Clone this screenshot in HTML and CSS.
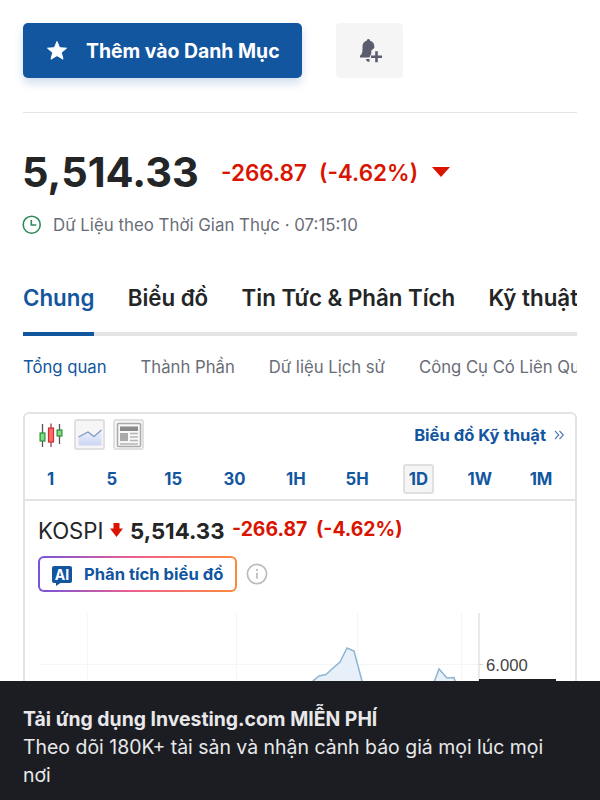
FILE: index.html
```html
<!DOCTYPE html>
<html lang="vi">
<head>
    <meta charset="UTF-8">
    <meta name="viewport" content="width=device-width, initial-scale=1.0">
    <title>KOSPI</title>
    <link rel="stylesheet" href="styles.css">
</head>
<body>

<main class="page">
    <div class="actions">
        <button class="btn-watchlist">
            <svg width="22" height="22" viewBox="0 0 22 22"><path d="M11 1.500l2.600 6.200 6.900.5-5.200 4.400 1.700 6.600L11 15.600l-6 3.600 1.700-6.600L1.500 8.200l6.900-.5z" fill="#fff" stroke="#fff" stroke-linejoin="round"/></svg>
            <span>Thêm vào Danh Mục</span>
        </button>
        <button class="btn-alert">
            <svg width="24" height="24" viewBox="0 0 24 24" fill="#5b5d6e">
                <path d="M8.700 1.800a1.700 1.700 0 0 1 3.400 0C14.600 2.500 16.300 4.700 16.300 7.100V9L13.300 11.500V14.500L11.500 18.500H2V16.800C4 15.300 4.500 13 4.500 10V7.500C4.500 4.700 6 2.500 8.700 1.800z"/>
                <path d="M8 20h3.500v2.800A2.900 2.900 0 0 1 8 20z"/>
                <path d="M17.200 12.200h2.600v4.200h4.200v2.600h-4.200v4.200h-2.600v-4.200H13v-2.600h4.200z"/>
            </svg>
        </button>
    </div>

    <div class="quote">
        <span class="price">5,514.33</span>
        <span class="change">-266.87</span>
        <span class="percent">(-4.62%)</span>
        <span class="arrow-down"></span>
    </div>
    <div class="realtime">
        <svg width="20" height="20" viewBox="0 0 20 20" fill="none" stroke="#2e8b57" stroke-width="1.600"><circle cx="9.700" cy="9.700" r="8.500"/><path d="M9.300 5v5h5"/></svg>
        <span>Dữ Liệu theo Thời Gian Thực · 07:15:10</span>
    </div>

    <nav class="tabs">
        <a class="active">Chung</a>
        <a>Biểu đồ</a>
        <a>Tin Tức &amp; Phân Tích</a>
        <a>Kỹ thuật</a>
    </nav>
    <nav class="subtabs">
        <a class="active">Tổng quan</a>
        <a>Thành Phần</a>
        <a>Dữ liệu Lịch sử</a>
        <a>Công Cụ Có Liên Quan</a>
    </nav>

    <section class="chart-box">
        <div class="toolbar">
            <svg class="candles" width="26" height="26" viewBox="0 0 26 26">
                <path d="M4.500 2v23M21.500 2v20" stroke="#555" stroke-width="1.300"/>
                <path d="M13 1.500V25" stroke="#8b4a4a" stroke-width="1.300"/>
                <g stroke-width="1.200">
                    <rect x="2.100" y="11" width="4.800" height="8" fill="#7ee07e" stroke="#2f8a35"/>
                    <rect x="10.500" y="6" width="5" height="14" fill="#ff6a6a" stroke="#c93038"/>
                    <rect x="19.100" y="8" width="4.800" height="6" fill="#7ee07e" stroke="#2f8a35"/>
                </g>
            </svg>
            <span class="tool">
                <svg width="26" height="26" viewBox="0 0 26 26">
                    <defs><linearGradient id="area" x1="0" y1="0" x2="0" y2="1"><stop offset="0" stop-color="#eef2fc"/><stop offset="1" stop-color="#cbd6f2"/></linearGradient></defs>
                    <path d="M1.500 15l9.500-5 6 4.500 7.500-6.500V23.500h-23z" fill="url(#area)"/>
                    <path d="M1.500 15l9.500-5 6 4.500 7.500-6.500" fill="none" stroke="#7f97c4" stroke-width="1.300"/>
                </svg>
            </span>
            <span class="tool">
                <svg width="26" height="26" viewBox="0 0 26 26">
                    <rect x="1.500" y="1.500" width="23" height="23" rx="1" fill="#f7f7f7" stroke="#aaa" stroke-width="1.500"/>
                    <path d="M4 4.500h18v4.500H4z" fill="#8b8b8b"/>
                    <path d="M4 11h8v8H4z" fill="#aaa"/>
                    <path d="M14 11.500h8M14 15h8M14 18.500h8M4 22h18" stroke="#b5b5b5" stroke-width="1.400"/>
                </svg>
            </span>
            <a class="tech-link">Biểu đồ Kỹ thuật <svg width="11" height="10" viewBox="0 0 11 10"><path d="M1 1l3.800 4L1 9M5.500 1l3.800 4-3.800 4" fill="none" stroke="#5478b0" stroke-width="1.100"/></svg></a>
        </div>
        <div class="intervals">
            <span>1</span>
            <span>5</span>
            <span>15</span>
            <span>30</span>
            <span>1H</span>
            <span>5H</span>
            <span class="selected">1D</span>
            <span>1W</span>
            <span>1M</span>
        </div>
        <div class="chart-title">
            <span class="name">KOSPI</span>
            <svg width="13" height="14" viewBox="0 0 13 14"><path d="M3.500 0h6v5.500H13L6.500 14 0 5.500h3.500z" fill="#d91400"/></svg>
            <span class="last">5,514.33</span>
            <span class="diff">-266.87</span>
            <span class="diff">(-4.62%)</span>
        </div>
        <div class="ai-row">
            <button class="btn-ai">
                <span class="ai-badge">AI</span>
                <span>Phân tích biểu đồ</span>
            </button>
            <svg width="22" height="22" viewBox="0 0 22 22" fill="none" stroke="#bcbcbc" stroke-width="1.700"><circle cx="11" cy="11" r="9.600"/><path d="M11 9.700v6M11 6v2"/></svg>
        </div>
        <svg class="chart" width="552" height="90" viewBox="0 0 552 90">
            <path d="M63.500 0v90M212.500 0v90M333.500 0v90M437.500 0v90M15 51.500h440" stroke="#f5f5f5"/>
            <path d="M283 78L289 68 295 63 302 61.500 308 56 316 49 323 35 330 38 338 68 341 82z" fill="#e7f0f8"/>
            <path d="M283 78L289 68 295 63 302 61.500 308 56 316 49 323 35 330 38 338 68 341 82" fill="none" stroke="#8db4d3" stroke-width="1.500"/>
            <path d="M409 72l6-16 8 9 7-.5 3 10z" fill="#e7f0f8"/>
            <path d="M409 72l6-16 8 9 7-.5 3 10" fill="none" stroke="#8db4d3" stroke-width="1.500"/>
            <path d="M455 0v90M455 51.500h4" stroke="#d6d6d6"/>
            <text x="462" y="58">6.000</text>
            <path d="M455 66h77v20h-77z" fill="#1c1d22"/>
        </svg>
    </section>
</main>

<footer class="app-banner">
    <strong>Tải ứng dụng Investing.com MIỄN PHÍ</strong>
    <p>Theo dõi 180K+ tài sản và nhận cảnh báo giá mọi lúc mọi nơi</p>
</footer>

</body>
</html>
```
FILE: styles.css
```css
* {
    box-sizing: border-box;
}
body {
    margin: 0;
    height: 800px;
    overflow: hidden;
    display: flex;
    flex-direction: column;
    font-family: Inter, "Liberation Sans", sans-serif;
    color: #232526;
    background: #fff;
}
.page {
    height: 681px;
    flex: none;
    padding: 23px 23px 0;
    overflow: hidden;
}
button {
    font-family: inherit;
    border: none;
    padding: 0;
}
svg {
    display: block;
    flex: none;
}
.actions {
    display: flex;
    gap: 34px;
    height: 90px;
    border-bottom: 1px solid #e6e6e8;
}
.btn-watchlist {
    display: flex;
    align-items: center;
    gap: 18px;
    width: 279px;
    height: 55px;
    padding-left: 23px;
    border-radius: 5px;
    background: #1256a0;
    color: #fff;
    font-size: 19.4px;
    font-weight: 700;
    white-space: nowrap;
    box-shadow: 0 5px 10px rgba(18, 86, 160, 0.2);
}
.btn-alert {
    display: flex;
    align-items: center;
    justify-content: center;
    width: 67px;
    height: 55px;
    border-radius: 4px;
    background: #f5f5f5;
}
.quote {
    display: flex;
    align-items: center;
    height: 60px;
    margin-top: 29px;
    white-space: nowrap;
}
.price {
    width: 199px;
    margin-left: -1px;
    font-size: 41.5px;
    font-weight: 700;
}
.change,
.percent {
    color: #d91400;
    font-size: 22.5px;
    font-weight: 600;
}
.change {
    width: 98px;
}
.percent {
    width: 113px;
}
.arrow-down {
    border: 9px solid transparent;
    border-top: 10px solid #d91400;
    border-bottom: none;
}
.realtime {
    display: flex;
    align-items: center;
    gap: 11px;
    height: 24px;
    margin-top: 11px;
    margin-left: -1px;
    color: #6a6d78;
    font-size: 16.85px;
    white-space: nowrap;
}
.tabs {
    display: flex;
    gap: 33.4px;
    height: 56px;
    margin-top: 43px;
    overflow: hidden;
    box-shadow: inset 0 -4px #e4e4e4;
    font-size: 22.3px;
    font-weight: 600;
    line-height: 35px;
    white-space: nowrap;
}
.tabs .active {
    color: #1256a0;
    border-bottom: 4px solid #1256a0;
}
.subtabs {
    display: flex;
    gap: 34px;
    height: 28px;
    margin-top: 18px;
    overflow: hidden;
    color: #6a6d78;
    font-size: 16.7px;
    line-height: 27px;
    white-space: nowrap;
}
.subtabs .active {
    color: #1256a0;
}
.chart-box {
    height: 300px;
    margin-top: 30px;
    overflow: hidden;
    border: 2px solid #e2e3e5;
    border-radius: 6px;
}
.toolbar {
    display: flex;
    align-items: center;
    height: 41px;
    padding: 0 10px 0 13px;
}
.candles {
    margin-right: 10px;
}
.tool {
    display: flex;
    align-items: center;
    justify-content: center;
    width: 31px;
    height: 31px;
    margin-right: 8px;
    border: 2px solid #e0e0e3;
    border-radius: 3px;
    background: #f6f6f6;
}
.tech-link {
    display: flex;
    align-items: center;
    gap: 8px;
    margin-left: auto;
    color: #1256a0;
    font-size: 16.6px;
    font-weight: 700;
}
.intervals {
    display: grid;
    grid-template-columns: repeat(9, 61.3px);
    justify-items: center;
    align-items: center;
    height: 46px;
    margin-left: -5px;
    padding-top: 4px;
    border-bottom: 2px solid #e2e3e5;
    color: #1256a0;
    font-size: 16.7px;
    font-weight: 700;
}
.intervals .selected {
    padding: 3px 4px;
    border: 2px solid #e0e0e3;
    border-radius: 3px;
    background: #f5f5f5;
}
.chart-title {
    display: flex;
    align-items: center;
    height: 30px;
    margin-top: 14px;
    padding-left: 13px;
    white-space: nowrap;
}
.chart-title .name {
    width: 72px;
    font-size: 22.2px;
}
.chart-title .last {
    width: 102px;
    margin-left: 7px;
    font-size: 22.2px;
    font-weight: 700;
}
.chart-title .diff {
    width: 84px;
    margin-top: -2px;
    color: #d91400;
    font-size: 19.4px;
    font-weight: 700;
}
.ai-row {
    display: flex;
    align-items: center;
    gap: 9px;
    height: 36px;
    margin-top: 11px;
    padding-left: 13px;
}
.btn-ai {
    display: flex;
    align-items: center;
    gap: 12px;
    width: 199px;
    height: 36px;
    padding-left: 12px;
    border: 2px solid transparent;
    border-radius: 6px;
    background: linear-gradient(#fff, #fff) padding-box, linear-gradient(90deg, #7654dc, #f0608a 50%, #fb8a3c) border-box;
    color: #1256a0;
    font-size: 16.6px;
    font-weight: 700;
    white-space: nowrap;
}
.ai-badge {
    position: relative;
    width: 20px;
    height: 17px;
    border-radius: 2px;
    background: #1256a0;
    color: #fff;
    font-size: 14px;
    font-weight: 700;
    line-height: 17px;
    text-align: center;
}
/* speech bubble tail */
.ai-badge::after {
    content: "";
    position: absolute;
    left: 4px;
    top: 16px;
    border-top: 4px solid #1256a0;
    border-right: 6px solid transparent;
}
.chart {
    margin-top: 21px;
    margin-left: -1px;
}
.chart text {
    fill: #444;
    font-family: "Liberation Sans", sans-serif;
    font-size: 16.7px;
}
.app-banner {
    flex: 1;
    padding: 24px 40px 0 23px;
    background: #1c1d22;
    color: #e8e8ea;
    font-size: 19.45px;
    line-height: 28px;
}
.app-banner strong {
    font-size: 19.4px;
    font-weight: 700;
}
.app-banner p {
    margin: 0;
}
```
